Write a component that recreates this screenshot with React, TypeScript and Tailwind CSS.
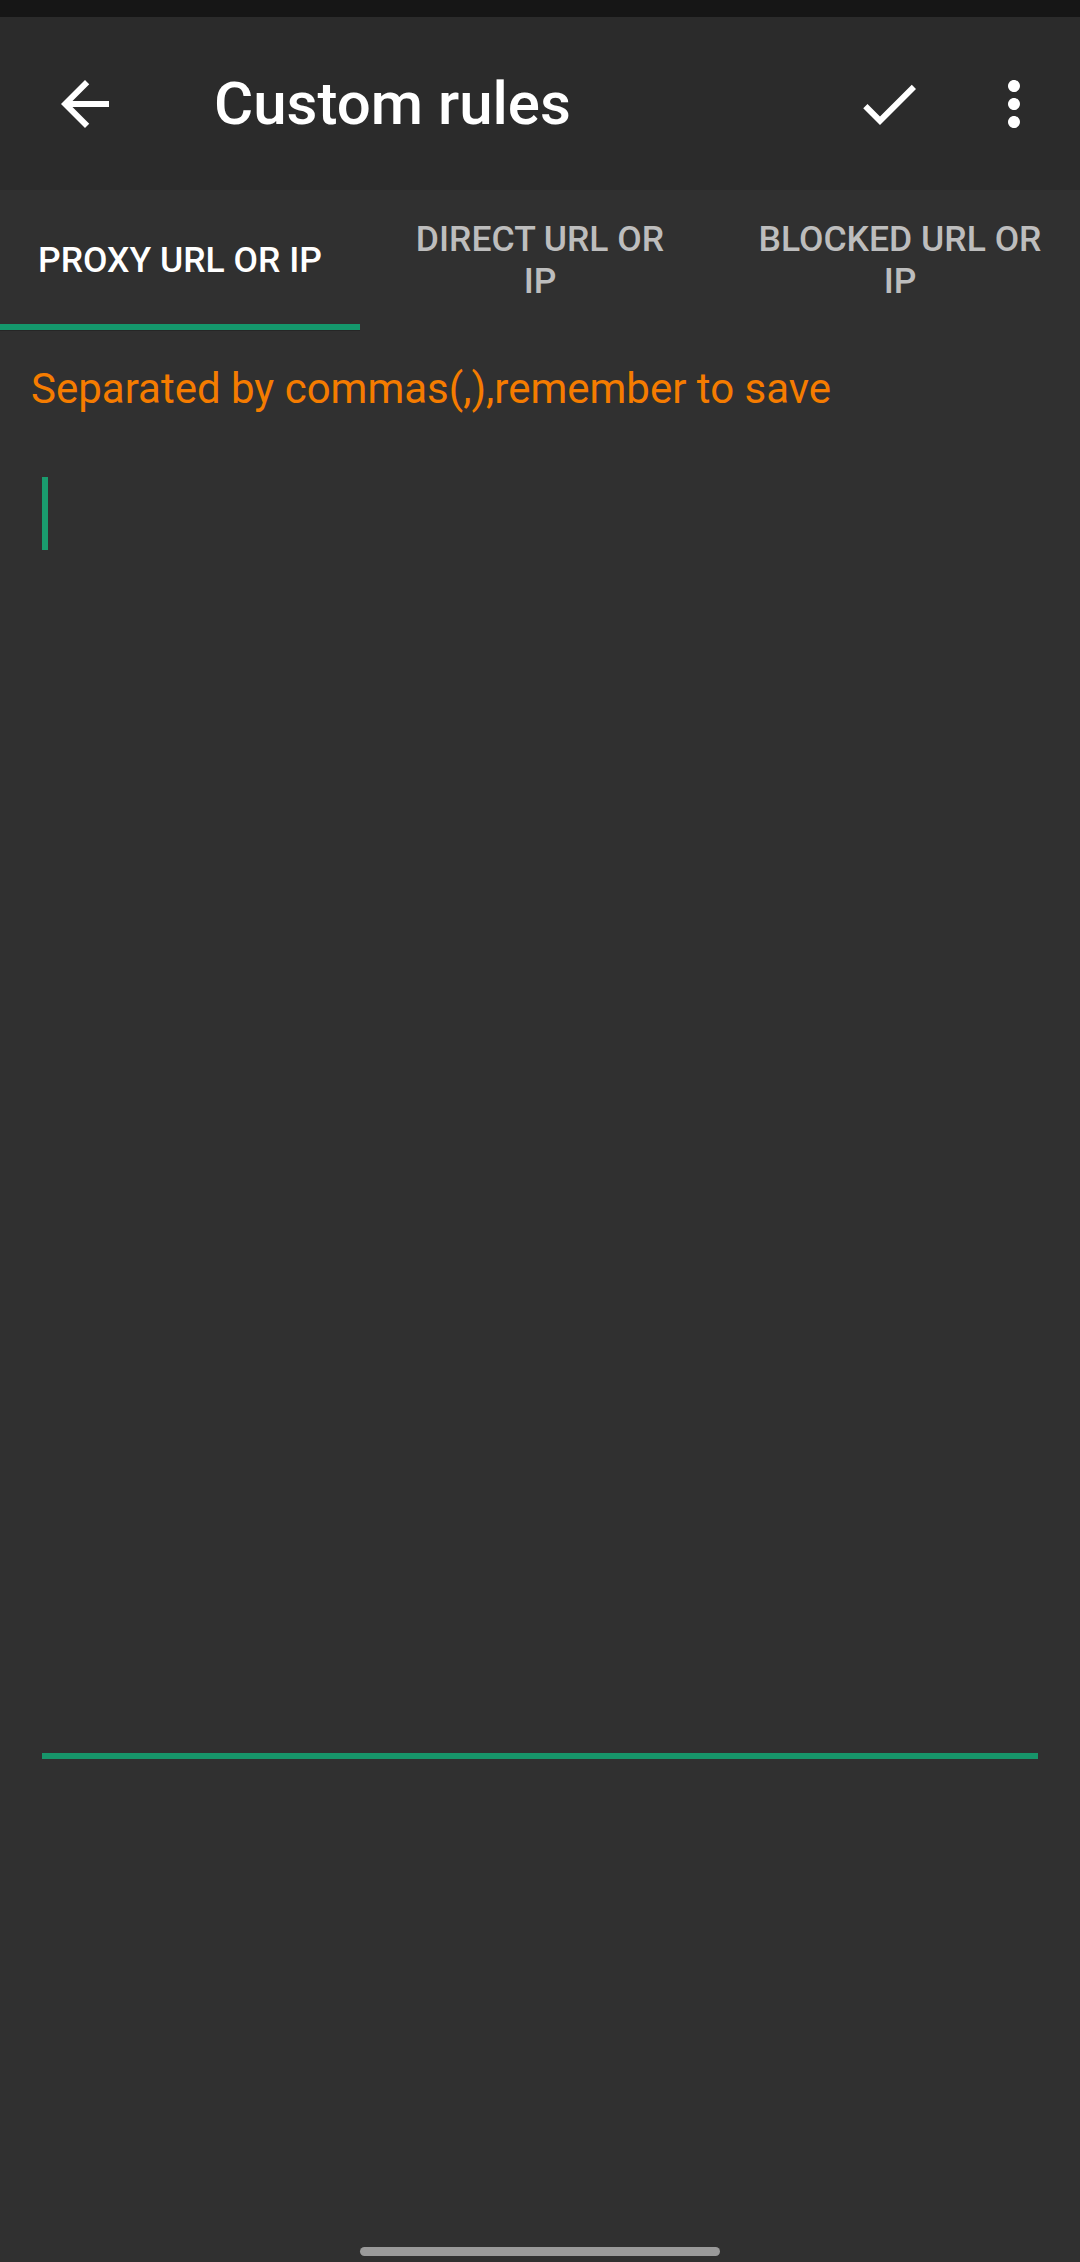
import { useState } from 'react';

// tab labels, broken the way the app wraps them
const TABS = [['PROXY URL OR IP'], ['DIRECT URL OR', 'IP'], ['BLOCKED URL OR', 'IP']];

function BackIcon() {
  return (
    <svg viewBox="0 0 24 24" className="h-[72px] w-[72px] fill-white">
      <path d="M20 11H7.83l5.59-5.59L12 4l-8 8 8 8 1.41-1.41L7.83 13H20v-2z" />
    </svg>
  );
}

function CheckIcon() {
  return (
    <svg viewBox="0 0 24 24" className="h-[72px] w-[72px] fill-white">
      <path d="M9 16.17L4.83 12l-1.42 1.41L9 19 21 7l-1.41-1.41z" />
    </svg>
  );
}

function MoreIcon() {
  return (
    <svg viewBox="0 0 24 24" className="h-[72px] w-[72px] fill-white">
      <path d="M12 8c1.1 0 2-.9 2-2s-.9-2-2-2-2 .9-2 2 .9 2 2 2zm0 2c-1.1 0-2 .9-2 2s.9 2 2 2 2-.9 2-2-.9-2-2-2zm0 6c-1.1 0-2 .9-2 2s.9 2 2 2 2-.9 2-2-.9-2-2-2z" />
    </svg>
  );
}

export default function App() {
  const [active, setActive] = useState(0);

  return (
    <div className="flex h-[2262px] w-[1080px] flex-col bg-[#303030] font-['Roboto',sans-serif]">
      {/* status bar */}
      <div className="h-[17px] bg-[#161616]" />

      {/* toolbar */}
      <header className="flex h-[173px] items-center bg-[#2b2b2b] pl-[49px] pr-[30px]">
        <BackIcon />
        <h1 className="ml-[93px] flex-1 text-[60px] font-medium leading-[70px] text-white">
          Custom rules
        </h1>
        <CheckIcon />
        <div className="ml-[53px]">
          <MoreIcon />
        </div>
      </header>

      {/* tabs */}
      <nav className="grid grid-cols-3">
        {TABS.map((lines, i) => (
          <button
            key={lines.join(' ')}
            onClick={() => setActive(i)}
            className="flex h-[141px] flex-col"
          >
            <span
              className={`flex flex-1 flex-col items-center justify-center whitespace-nowrap pt-[6px] text-[35.5px] font-medium leading-[42px] ${
                i === active ? 'text-white' : 'text-[#bdbdbd]'
              }`}
            >
              {lines.map((line) => (
                <span key={line}>{line}</span>
              ))}
            </span>
            <span
              className={`h-[6px] w-full ${i === active ? 'bg-[#14986c]' : 'bg-transparent'}`}
            />
            <span className={`h-px w-full ${i === active ? 'bg-[#262626]' : 'bg-transparent'}`} />
          </button>
        ))}
      </nav>

      <p className="ml-[31px] mt-[33px] text-[42px] leading-[50px] text-[#f57c00]">
        Separated by commas(,),remember to save
      </p>

      {/* multi-line editor */}
      <div className="mx-[42px] mt-[63px] h-[1282px] border-b-[6px] border-[#17956a]">
        <div className="h-[73px] w-[6px] bg-[#1a9c6e]" />
      </div>

      <div className="flex flex-1 items-end justify-center pb-[6px]">
        <div className="h-[9px] w-[360px] rounded-full bg-[#9a9a9a]" />
      </div>
    </div>
  );
}
